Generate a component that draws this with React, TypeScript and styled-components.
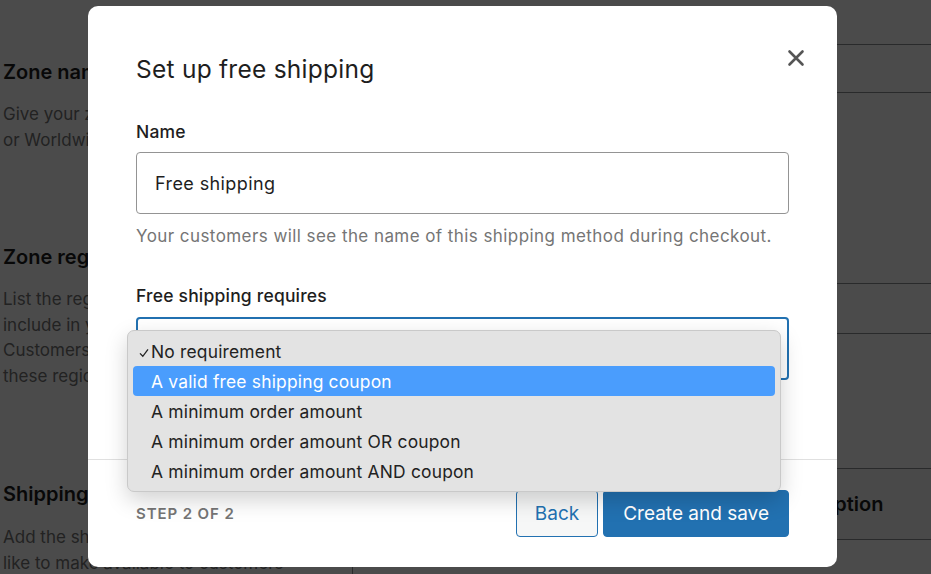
import React from "react";
import styled, { createGlobalStyle } from "styled-components";

const Global = createGlobalStyle`
html, body {
  margin: 0;
  padding: 0;
  background: #ffffff;
  font-family: Inter, "Noto Sans", "Liberation Sans", sans-serif;
  color: #1e1e1e;
  overflow: hidden;
}
* { box-sizing: border-box; }
`;

const options = [
  "No requirement",
  "A valid free shipping coupon",
  "A minimum order amount",
  "A minimum order amount OR coupon",
  "A minimum order amount AND coupon",
];

const App = () => {
  return (
    <>
      <Global />
      <Page>
        <Section $height={220}>
          <Side $pad={60}>
            <SideTitle>Zone name</SideTitle>
            <SideText $gap={18}>
              Give your zone a name! E.g. Local,
              <br />
              or Worldwide.
            </SideText>
          </Side>
          <Main>
            <FakeInput $top={44} $h={49} />
          </Main>
        </Section>

        <Section $height={230}>
          <Side $pad={25}>
            <SideTitle>Zone regions</SideTitle>
            <SideText $gap={18}>
              List the regions you'd like to
              <br />
              include in your shipping zone.
              <br />
              Customers will be matched against
              <br />
              these regions.
            </SideText>
          </Side>
          <Main>
            <FakeInput $top={63} $h={51} />
          </Main>
        </Section>

        <Section $height={124}>
          <Side $pad={32}>
            <SideTitle>Shipping methods</SideTitle>
            <SideText $gap={19}>
              Add the shipping methods you'd
              <br />
              like to make available to customers
            </SideText>
          </Side>
          <Main>
            <TableHead>
              <HeadCell>Shipping method</HeadCell>
              <HeadCell>Description</HeadCell>
            </TableHead>
            <TableRow />
          </Main>
        </Section>
      </Page>

      <Overlay>
        <Modal>
          <Close aria-label="Close">
            <svg width="20" height="20" viewBox="0 0 20 20">
              <path
                d="M3.5 3.5 L16.5 16.5 M16.5 3.5 L3.5 16.5"
                stroke="#555"
                strokeWidth="2.6"
                strokeLinecap="round"
              />
            </svg>
          </Close>
          <Body>
            <Title>Set up free shipping</Title>

            <Label $gap={37}>Name</Label>
            <TextInput>Free shipping</TextInput>
            <Help>
              Your customers will see the name of this shipping method during
              checkout.
            </Help>

            <Label $gap={40}>Free shipping requires</Label>
            <SelectWrap>
              <SelectBox />
              <Menu>
                {options.map((o, i) => (
                  <MenuItem key={o} $active={i === 1}>
                    {i === 0 && (
                      <Check width="10" height="10" viewBox="0 0 10 10">
                        <path
                          d="M1 5.4 L3.8 8.3 L9 1.4"
                          stroke="#222"
                          strokeWidth="1.3"
                          fill="none"
                        />
                      </Check>
                    )}
                    {o}
                  </MenuItem>
                ))}
              </Menu>
            </SelectWrap>
          </Body>

          <Footer>
            <Step>Step 2 of 2</Step>
            <Actions>
              <Button>Back</Button>
              <Button $primary>Create and save</Button>
            </Actions>
          </Footer>
        </Modal>
      </Overlay>
    </>
  );
};

export default App;

const Page = styled.div`
  width: 931px;
  height: 574px;
  padding-left: 3px;
  display: flex;
  flex-direction: column;
`;

const Section = styled.div<{ $height: number }>`
  height: ${(p) => p.$height}px;
  display: grid;
  grid-template-columns: 349px 1fr;
`;

const Side = styled.div<{ $pad: number }>`
  padding-top: ${(p) => p.$pad}px;
`;

const SideTitle = styled.div`
  font-size: 20px;
  line-height: 24px;
  font-weight: 600;
  color: #1e1e1e;
`;

const SideText = styled.div<{ $gap: number }>`
  margin-top: ${(p) => p.$gap}px;
  font-size: 17px;
  line-height: 25.5px;
  white-space: nowrap;
  color: #757575;
`;

const Main = styled.div`
  display: flex;
  flex-direction: column;
`;

const FakeInput = styled.div<{ $top: number; $h: number }>`
  margin-top: ${(p) => p.$top}px;
  height: ${(p) => p.$h}px;
  border: 1px solid #8c8f94;
  border-right: none;
  background: #fff;
`;

const TableHead = styled.div`
  margin-top: 18px;
  height: 72px;
  background: #f6f7f7;
  border: 1px solid #8c8f94;
  border-right: none;
  display: grid;
  grid-template-columns: 395px 1fr;
  align-items: center;
  padding-left: 24px;
`;

const HeadCell = styled.div`
  font-size: 20px;
  font-weight: 600;
  white-space: nowrap;
  color: #1e1e1e;
`;

const TableRow = styled.div`
  flex: 1;
  border-left: 1px solid #8c8f94;
  background: #fff;
`;

const Overlay = styled.div`
  position: fixed;
  inset: 0;
  background: rgba(0, 0, 0, 0.705);
  display: flex;
  align-items: flex-start;
  padding: 6px 0 0 88px;
`;

const Modal = styled.div`
  position: relative;
  width: 749px;
  height: 561px;
  background: #fff;
  border-radius: 10px;
  display: flex;
  flex-direction: column;
`;

const Close = styled.button`
  position: absolute;
  top: 42px;
  right: 31px;
  width: 20px;
  height: 20px;
  padding: 0;
  border: none;
  background: none;
  display: flex;
`;

const Body = styled.div`
  padding: 47px 48px 0;
  display: flex;
  flex-direction: column;
`;

const Title = styled.h1`
  margin: 0;
  font-size: 24.5px;
  line-height: 32px;
  font-weight: 400;
  letter-spacing: 0.25px;
  color: #1e1e1e;
`;

const Label = styled.div<{ $gap: number }>`
  margin-top: ${(p) => p.$gap}px;
  font-size: 17.5px;
  line-height: 20px;
  font-weight: 500;
  letter-spacing: 0.2px;
  color: #1e1e1e;
`;

const TextInput = styled.div`
  margin-top: 10px;
  height: 62px;
  border: 1px solid #949494;
  border-radius: 4px;
  padding: 0 18px;
  display: flex;
  align-items: center;
  font-size: 18px;
  letter-spacing: 0.4px;
  color: #1e1e1e;
`;

const Help = styled.div`
  margin-top: 12px;
  font-size: 17px;
  line-height: 20px;
  letter-spacing: 0.43px;
  white-space: nowrap;
  color: #757575;
`;

const SelectWrap = styled.div`
  position: relative;
  margin-top: 11px;
`;

const SelectBox = styled.div`
  height: 63px;
  border: 2px solid #2271b1;
  border-radius: 4px;
`;

const Menu = styled.div`
  position: absolute;
  top: 13px;
  left: -9px;
  width: 654px;
  padding: 5px;
  background: #e3e3e3;
  border: 1px solid #c9c9c9;
  border-radius: 7px;
  box-shadow: 0 8px 22px rgba(0, 0, 0, 0.18);
  z-index: 2;
`;

const MenuItem = styled.div<{ $active?: boolean }>`
  position: relative;
  height: 30px;
  padding-left: 18px;
  display: flex;
  align-items: center;
  font-size: 17.4px;
  letter-spacing: 0.2px;
  border-radius: 4px;
  color: ${(p) => (p.$active ? "#fff" : "#222")};
  background: ${(p) => (p.$active ? "#4a9dfd" : "transparent")};
`;

const Check = styled.svg`
  position: absolute;
  left: 6px;
  top: 12px;
`;

const Footer = styled.div`
  margin-top: auto;
  border-top: 1px solid #e0e0e0;
  padding: 30px 48px;
  display: flex;
  align-items: center;
  justify-content: space-between;
`;

const Step = styled.div`
  font-size: 15px;
  font-weight: 600;
  letter-spacing: 0.9px;
  text-transform: uppercase;
  color: #757575;
`;

const Actions = styled.div`
  display: flex;
  gap: 5px;
`;

const Button = styled.button<{ $primary?: boolean }>`
  height: 47px;
  padding: 0 ${(p) => (p.$primary ? 19 : 18)}px;
  border-radius: 4px;
  font-family: inherit;
  font-size: 19px;
  border: 1px solid #2271b1;
  color: ${(p) => (p.$primary ? "#fff" : "#2271b1")};
  background: ${(p) => (p.$primary ? "#2271b1" : "#f6f7f7")};
`;
